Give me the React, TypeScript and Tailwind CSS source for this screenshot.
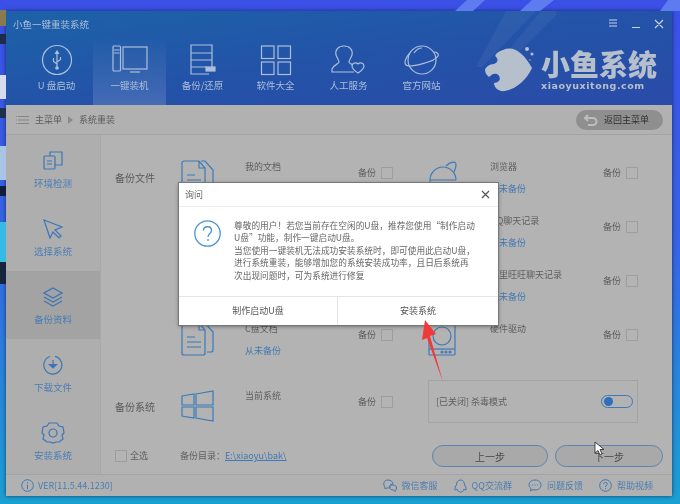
import type { ReactNode } from 'react'

const font = { fontFamily: '"Noto Sans CJK SC", "Liberation Sans", sans-serif' }

function Svg({ w, h, children, stroke = 'currentColor' }: { w: number; h: number; children: ReactNode; stroke?: string }) {
  return (
    <svg width={w} height={h} viewBox={`0 0 ${w} ${h}`} fill="none" stroke={stroke} strokeWidth={1.2} className="block shrink-0">
      {children}
    </svg>
  )
}

const tabs: { label: string; active?: boolean; icon: ReactNode }[] = [
  {
    label: 'U 盘启动',
    icon: (
      <Svg w={32} h={32}>
        <circle cx="16" cy="16" r="14.5" />
        <path d="M16 7v17M16 7l-1.5 2.5h3zM16 20l-3.5-2.5V14M16 18l3.5-2.5V13" />
        <circle cx="16" cy="24" r="1.2" fill="currentColor" />
      </Svg>
    ),
  },
  {
    label: '一键装机',
    active: true,
    icon: (
      <Svg w={36} h={32}>
        <rect x="1" y="2" width="7.5" height="25" rx="1" />
        <path d="M2 6h5.5M2 9h5.5" />
        <rect x="11" y="3" width="24" height="22" />
        <path d="M18 28h10" />
      </Svg>
    ),
  },
  {
    label: '备份/还原',
    icon: (
      <Svg w={28} h={32}>
        <path d="M20 30H2V1h21v22M2 9h21M2 16h21M2 23h16" />
        <rect x="17" y="23" width="9" height="4" fill="currentColor" />
      </Svg>
    ),
  },
  {
    label: '软件大全',
    icon: (
      <Svg w={32} h={32}>
        <rect x="1.5" y="2" width="12.5" height="12.5" />
        <rect x="18" y="2" width="12.5" height="12.5" />
        <rect x="1.5" y="18" width="12.5" height="12.5" />
        <rect x="18" y="18" width="12.5" height="12.5" />
      </Svg>
    ),
  },
  {
    label: '人工服务',
    icon: (
      <Svg w={36} h={32}>
        <path d="M13 2c6 0 9 4 8 9-1 3-3 5-3 7 0 1 2 2 4 3M13 2C7 2 4 6 5 11c1 3 3 5 3 7 0 2-6 3-7 7v3h22" />
        <path d="M27 20c2-2 6-1 6 2s-3 5-6 7c-3-2-6-4-6-7s4-4 6-2z" />
      </Svg>
    ),
  },
  {
    label: '官方网站',
    icon: (
      <Svg w={36} h={32}>
        <circle cx="18" cy="16" r="14" />
        <path d="M6 9C1 14 0 19 2 21c3 3 29-3 32-9 1-2-1-4-4-4M10 9c2-3 5-5 8-5" />
      </Svg>
    ),
  },
]

const sideItems: { label: string; active?: boolean; icon: ReactNode }[] = [
  {
    label: '环境检测',
    icon: (
      <Svg w={20} h={20}>
        <rect x="1" y="5" width="11" height="13" rx="1" />
        <path d="M7 5V1h12v13h-7M4 10h5M4 13h5" />
      </Svg>
    ),
  },
  {
    label: '选择系统',
    icon: (
      <Svg w={20} h={20}>
        <path d="M1 1l18 7-7 3 6 6-2 2-6-6-3 6z" />
      </Svg>
    ),
  },
  {
    label: '备份资料',
    active: true,
    icon: (
      <Svg w={20} h={20}>
        <path d="M10 1l9 5-9 5-9-5zM1 10l9 5 9-5M1 14l9 5 9-5" />
      </Svg>
    ),
  },
  {
    label: '下载文件',
    icon: (
      <Svg w={20} h={20}>
        <path d="M12 1.3A9 9 0 1 1 7 1.5" />
        <path d="M10 5v7" />
        <path d="M6.5 9.5L10 13l3.5-3.5z" fill="currentColor" />
      </Svg>
    ),
  },
  {
    label: '安装系统',
    icon: (
      <Svg w={24} h={22}>
        <path d="M8 1h8l2 3 4 1 1 6-2 2 1 4-4 3h-3l-3 1-3-1H6l-4-3 1-4-2-2 1-6 4-1z" />
        <circle cx="12" cy="11" r="4" />
      </Svg>
    ),
  },
]

function DocIcon() {
  return (
    <Svg w={33} h={34}>
      <path d="M18 1H3a2 2 0 0 0-2 2v28a2 2 0 0 0 2 2h19a2 2 0 0 0 2-2V8zM18 1v7h6" />
      <path d="M20 1l4 0 8 9v18a2 2 0 0 1-2 2h-4M6 15h8M6 20h14M6 25h14" />
    </Svg>
  )
}

function Browser() {
  return (
    <Svg w={30} h={34}>
      <path d="M2 20a13 13 0 0 1 26 0M2 20h26" />
      <path d="M18 6c4-4 10-6 10-1 0 3-1 5-2 7" />
      <path d="M2 20c0 8 6 13 13 13s10-3 12-7" />
    </Svg>
  )
}

function Disk() {
  return (
    <Svg w={28} h={34}>
      <rect x="1" y="1" width="26" height="32" rx="1" />
      <circle cx="14" cy="14" r="9" />
      <path d="M1 27h26" />
      <circle cx="14" cy="30" r="1" />
      <circle cx="18" cy="30" r="1" />
      <circle cx="22" cy="30" r="1" />
    </Svg>
  )
}

function WinIcon() {
  return (
    <Svg w={33} h={32}>
      <path d="M1 6l12-2v11H1zM15 4l17-3v14H15zM1 17h12v11l-12-2zM15 17h17v14l-17-3z" />
    </Svg>
  )
}

function Check({ size = 12 }: { size?: number }) {
  return <span className="block border border-[#9d9d9d] bg-[#b4b4b4]" style={{ width: size, height: size }} />
}

function BackupItem({ name, status, icon, iconW }: { name?: string; status?: string; icon: ReactNode; iconW: number }) {
  return (
    <div className="flex h-[54px] items-start">
      <div style={{ width: iconW }} className="shrink-0 text-[#3d7ab8]">
        {icon}
      </div>
      <div className="w-[113px] shrink-0 text-[9px] leading-[14px] text-[#5e5e5e]">
        <div>{name}</div>
        {status && <div className="mt-[8px] text-[#3f78b3]">{status}</div>}
      </div>
      <span className="mt-[6px] w-[23px] shrink-0 text-[9px] leading-[14px] text-[#5a5a5a]">备份</span>
      <span className="mt-[7px]">
        <Check />
      </span>
    </div>
  )
}

// rows that sit fully behind the dialog
function HiddenRow() {
  return <div className="h-[54px]" />
}

function FooterLink({ label, icon }: { label: string; icon: ReactNode }) {
  return (
    <div className="flex items-center gap-[5px] text-[#3f78b3]">
      {icon}
      <span className="text-[9px] text-[#4d7db0]">{label}</span>
    </div>
  )
}

export default function App() {
  return (
    <div style={font} className="relative h-[504px] w-[680px] overflow-hidden bg-gradient-to-b from-[#3b50e6] via-[#3566e4] to-[#1aa0d2] blur-[0.4px]">
      {/* desktop bits behind the window */}
      <div className="absolute left-0 top-[10px] h-[16px] w-[6px] bg-[#8a7a50]" />
      <div className="absolute left-0 top-[34px] h-[10px] w-[6px] bg-[#1c2c4a]" />
      <div className="absolute left-0 top-[75px] h-[24px] w-[6px] bg-[#d6dcf0]" />
      <div className="absolute left-0 top-[108px] h-[10px] w-[6px] bg-[#20304c]" />
      <div className="absolute left-0 top-[146px] h-[34px] w-[6px] bg-[#a9c4e4]" />
      <div className="absolute left-0 top-[186px] h-[10px] w-[6px] bg-[#101c3c]" />
      <div className="absolute left-0 top-[222px] h-[40px] w-[6px] bg-[#36bce4]" />
      <div className="absolute left-0 top-[262px] h-[22px] w-[6px] bg-[#16243c]" />
      <svg className="absolute left-0 top-0" width="680" height="11" fill="#5e7cf0">
        <path d="M455 11L467 0h18L473 11zM520 11L532 0h22L540 11zM660 11L668 0h12v11z" />
      </svg>

      <div className="flex pl-[6px] pt-[11px]">
        <div className="flex h-[485px] w-[666px] flex-col overflow-hidden shadow-[0_0_4px_rgba(0,0,30,0.6)]">
          {/* header */}
          <div className="relative h-[94px] shrink-0 bg-gradient-to-br from-[#1c62a8] via-[#2353a8] to-[#2a4ba8] text-[#adbfda]">
            <svg className="absolute left-[470px] top-0" width="80" height="60" fill="#ffffff" fillOpacity="0.05">
              <path d="M30 0h30L6 56H0zM65 0h15v4L30 54H20z" />
            </svg>
            <div className="relative flex h-[26px] items-center pl-[7px] text-[9.5px] text-[#aebfda]">小鱼一键重装系统</div>
            <div className="absolute left-0 top-[26px] flex h-[68px] pl-[14px]">
              {tabs.map((tab) => (
                <div
                  key={tab.label}
                  className={`flex w-[73px] flex-col items-center pt-[7px] ${tab.active ? 'bg-gradient-to-b from-white/0 to-white/15' : ''}`}
                >
                  <div className="flex h-[32px] items-center">{tab.icon}</div>
                  <span className="mt-[2px] text-[9.5px] leading-[14px]">{tab.label}</span>
                </div>
              ))}
            </div>
            <div className="absolute right-[8px] top-[7px] flex h-[12px] items-center text-[#c6d2e4]">
              <svg width="55" height="12" fill="none" stroke="currentColor" strokeWidth="1.2">
                <path d="M0 2h8M0 5h8M0 8h8M23 9.500h8M46 2l8 8M54 2l-8 8" />
              </svg>
            </div>
            <div className="absolute left-[479px] top-[32px] text-[#b6bfcc]">
              <svg width="50" height="50" viewBox="0 0 50 50" fill="currentColor">
                <path d="M18 7c10-5 21 3 29 18-5 11-15 21-27 23-7 1-11-4-11-8 6 0 8-6 3-9-3-1-5 0-8 3-3-2-4-5-4-8 3-4 6-5 9-5 3-1 5-4 2-7-2-2 1-5 7-7z" />
                <circle cx="42" cy="6" r="2" />
                <circle cx="47" cy="11" r="1.5" />
                <circle cx="45" cy="17" r="0.7" />
              </svg>
            </div>
            <div className="absolute left-[535px] top-[36px] w-[120px]">
              <div className="text-[29px] font-black leading-[32px] text-[#b6bfcc]">小鱼系统</div>
              <div className="mt-[1px] whitespace-nowrap text-[9.5px] font-bold leading-[12px] tracking-[0.55px] text-[#b6bfcc]" style={{ fontFamily: '"DejaVu Sans", sans-serif' }}>
                xiaoyuxitong.com
              </div>
            </div>
          </div>

          {/* breadcrumb */}
          <div className="flex h-[30px] shrink-0 items-center justify-between border-b border-[#a3a3a3] bg-[#b1b1b1] pl-[10px] pr-[9px]">
            <div className="flex items-center text-[9px] text-[#5c5c5c]">
              <svg width="13" height="10" stroke="#858585" strokeWidth="1" strokeDasharray="1 1 11 0" className="mr-[6px]">
                <path d="M0 1.5h13M0 5h13M0 8.5h13" />
              </svg>
              <span>主菜单</span>
              <span className="mx-[6px] h-0 w-0 border-y-[4px] border-l-[5px] border-y-transparent border-l-[#8a8a8a]" />
              <span>系统重装</span>
            </div>
            <div className="flex h-[20px] w-[87px] items-center rounded-full bg-[#8f8f8f] pl-[8px] text-[9px] text-[#2f2f2f]">
              <svg width="14" height="12" fill="none" stroke="#bdbdbd" strokeWidth="2" className="mr-[6px]">
                <path d="M1 4h8a3.5 3.5 0 0 1 0 7H4M4 1L1 4l3 3" />
              </svg>
              返回主菜单
            </div>
          </div>

          {/* body */}
          <div className="flex min-h-0 flex-1">
            <div className="w-[95px] shrink-0 border-r border-[#a8a8a8] bg-[#aeaeae]">
              {sideItems.map((item) => (
                <div
                  key={item.label}
                  className={`flex h-[68px] flex-col items-center justify-center text-[#3a76b8] ${item.active ? 'bg-[#a3a3a3]' : ''}`}
                >
                  <div className="flex h-[24px] items-center">{item.icon}</div>
                  <span className="mt-[3px] text-[9.5px] leading-[14px] text-[#4a7db5]">{item.label}</span>
                </div>
              ))}
            </div>

            <div className="min-w-0 flex-1 bg-[#b3b3b3] pl-[14px] pt-[25px]">
              <div className="flex">
                <div className="w-[66px] shrink-0 pt-[11px] text-[10px] leading-[14px] text-[#5a5a5a]">备份文件</div>
                <div className="w-[212px] shrink-0">
                  <BackupItem name="我的文档" icon={<DocIcon />} iconW={64} />
                  <HiddenRow />
                  <HiddenRow />
                  <BackupItem name="C盘文档" status="从未备份" icon={<DocIcon />} iconW={64} />
                </div>
                <div className="ml-[35px] w-[210px] shrink-0">
                  <BackupItem name="浏览器" status="从未备份" icon={<Browser />} iconW={62} />
                  <BackupItem name="QQ聊天记录" status="从未备份" icon={<Browser />} iconW={62} />
                  <BackupItem name="阿里旺旺聊天记录" status="从未备份" icon={<Browser />} iconW={62} />
                  <BackupItem name="硬件驱动" icon={<Disk />} iconW={62} />
                </div>
              </div>

              <div className="mt-[4px] flex h-[43px] items-center">
                <div className="mt-[10px] w-[66px] shrink-0 text-[10px] leading-[14px] text-[#5a5a5a]">备份系统</div>
                <div className="flex w-[212px] shrink-0 items-center">
                  <div className="mt-[8px] w-[64px] shrink-0 text-[#3d7ab8]">
                    <WinIcon />
                  </div>
                  <span className="-mt-[12px] w-[113px] shrink-0 text-[9px] leading-[14px] text-[#5e5e5e]">当前系统</span>
                  <span className="w-[23px] shrink-0 text-[9px] text-[#5a5a5a]">备份</span>
                  <Check />
                </div>
                <div className="ml-[35px] flex h-[43px] w-[210px] items-center justify-between border border-[#a3a3a3] pl-[7px] pr-[4px]">
                  <span className="text-[9px] text-[#5e5e5e]">[已关闭] 杀毒模式</span>
                  <span className="flex h-[13px] w-[32px] items-center rounded-full border border-[#3d78b8] pl-[2px]">
                    <span className="h-[9px] w-[9px] rounded-full bg-[#2f6fb8]" />
                  </span>
                </div>
              </div>

              <div className="mt-[22px] flex h-[22px] items-center">
                <Check size={12} />
                <span className="ml-[3px] w-[50px] shrink-0 text-[9px] text-[#5e5e5e]">全选</span>
                <span className="text-[9px] text-[#5e5e5e]">备份目录：</span>
                <span className="text-[9px] text-[#3f78b3] underline">E:\xiaoyu\bak\</span>
                <div className="ml-auto mr-[9px] flex gap-[7px] text-[10px] text-[#4a4a4a]">
                  <div className="flex h-[22px] w-[116px] items-center justify-center rounded-full border border-[#5d87b0] bg-[#a9a9a9]">上一步</div>
                  <div className="flex h-[22px] w-[108px] items-center justify-center rounded-full border border-[#5d87b0] bg-[#a9a9a9]">下一步</div>
                </div>
              </div>
            </div>
          </div>

          {/* footer */}
          <div className="flex h-[22px] shrink-0 items-center border-t border-[#a3a3a3] bg-[#b1b1b1] pl-[15px] pr-[19px]">
            <svg width="13" height="13" fill="none" stroke="#3f78b3" strokeWidth="1" className="mr-[4px]">
              <circle cx="6.5" cy="6.5" r="5.8" />
              <path d="M6.5 5.5v4.5M6.5 3v1.2" />
            </svg>
            <span className="text-[9px] text-[#4d7db0]">VER[11.5.44.1230]</span>
            <div className="ml-auto flex gap-[16px]">
              <FooterLink
                label="微信客服"
                icon={
                  <svg width="14" height="13" fill="none" stroke="currentColor">
                    <path d="M5 1c3 0 5 2 5 4-3 0-4 2-3.500 4-3 0-3 0-4.500 1V8C0 6 0 1 5 1zM10 6c2 0 3.500 1 3.500 3S13 11 12 11v1.500L10.500 11C8 11 7 10 7 8.500S8 6 10 6z" />
                  </svg>
                }
              />
              <FooterLink
                label="QQ交流群"
                icon={
                  <svg width="13" height="14" fill="none" stroke="currentColor">
                    <path d="M6.500 1c3 0 4 2.500 4 5 1 1 2 3 1.500 5-1 0-1.500-.5-2-1 0 2-2 3-3.500 3S3 12 3 10c-.5.5-1 1-2 1-.5-2 .5-4 1.500-5 0-2.500 1-5 4-5z" />
                  </svg>
                }
              />
              <FooterLink
                label="问题反馈"
                icon={
                  <svg width="14" height="13" fill="none" stroke="currentColor">
                    <path d="M7 1c3.500 0 6 2 6 5s-2.500 5-6 5c-1 0-1.500 0-2-.5L2.500 12l.5-2.500C1.500 8.500 1 7 1 6c0-3 2.500-5 6-5z" />
                    <path d="M4 6h1M6.500 6h1M9 6h1" />
                  </svg>
                }
              />
              <FooterLink
                label="帮助视频"
                icon={
                  <svg width="13" height="13" fill="none" stroke="currentColor">
                    <circle cx="6.500" cy="6.500" r="5.800" />
                    <path d="M4.800 5c0-2.200 3.500-2.200 3.500 0 0 1.300-1.800 1.300-1.800 3M6.500 9.200v1" />
                  </svg>
                }
              />
            </div>
          </div>
        </div>
      </div>

      {/* cursor */}
      <svg className="absolute left-[594px] top-[441px]" width="12" height="16" fill="#ffffff" stroke="#222222" strokeWidth="0.8">
        <path d="M1 1v11l3-2.500 2 4.500 2-1-2-4.500h4z" />
      </svg>

      {/* dialog */}
      <div className="absolute left-[179px] top-[183px] flex h-[142px] w-[319px] flex-col bg-white shadow-[0_0_0_1px_#777777,0_1px_4px_rgba(0,0,0,0.5)]">
        <div className="flex h-[24px] shrink-0 items-center justify-between border-b border-[#eeeeee] pl-[6px] pr-[8px]">
          <span className="text-[9px] text-[#666666]">询问</span>
          <svg width="9" height="9" fill="none" stroke="#555555" strokeWidth="1.200">
            <path d="M1 1l7 7M8 1L1 8" />
          </svg>
        </div>
        <div className="flex min-h-0 flex-1 pl-[15px] pr-[12px] pt-[13px]">
          <svg width="27" height="27" fill="none" stroke="#4a93d8" strokeWidth="1.300" className="mr-[13px] shrink-0">
            <circle cx="13.500" cy="13.500" r="12.700" />
            <path d="M9.500 10.500c0-5 8-5 8 0 0 3-3.500 3-3.500 6.500M14 19v2" />
          </svg>
          <p className="text-[8.700px] leading-[12.400px] text-[#666666]">
            尊敬的用户！若您当前存在空闲的U盘，推荐您使用“制作启动
            <br />
            U盘”功能，制作一键启动U盘。
            <br />
            当您使用一键装机无法成功安装系统时，即可使用此启动U盘，
            <br />
            进行系统重装，能够增加您的系统安装成功率，且日后系统再
            <br />
            次出现问题时，可为系统进行修复
          </p>
        </div>
        <div className="flex h-[29px] shrink-0 border-t border-[#e4e4e4] text-[9px] text-[#555555]">
          <div className="flex w-[159px] items-center justify-center border-r border-[#e4e4e4]">制作启动U盘</div>
          <div className="flex flex-1 items-center justify-center">安装系统</div>
        </div>
      </div>

      {/* red arrow annotation */}
      <svg className="absolute left-[415px] top-[315px]" width="35" height="70" fill="#f03a3a">
        <path d="M10 5L21 19l-6 2 13 46-16-44-5 2z" />
      </svg>
    </div>
  )
}
